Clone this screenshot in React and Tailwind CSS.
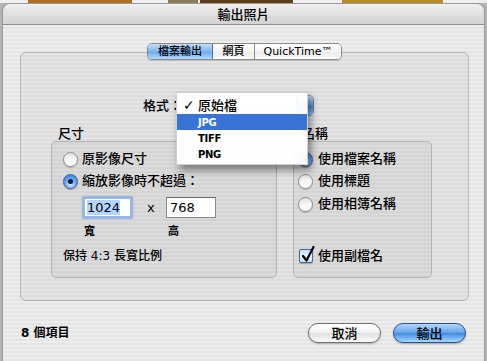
import React from "react";

function Radio({ checked }) {
  return checked ? (
    <span className="inline-flex w-[15px] h-[15px] shrink-0 rounded-full border border-[#3a5f9e] bg-[radial-gradient(circle_at_50%_75%,#d4ecff_0%,#6eaaf0_45%,#2f6fd0_100%)] items-center justify-center shadow-[0_1px_1px_rgba(0,0,0,0.3)]">
      <span className="w-[5px] h-[5px] rounded-full bg-[#0d1d3d]" />
    </span>
  ) : (
    <span className="inline-flex w-[15px] h-[15px] shrink-0 rounded-full border border-[#8c8c8c] bg-[linear-gradient(#e3e3e3,#f4f4f4_45%,#ffffff)] shadow-[0_1px_1px_rgba(0,0,0,0.2)]" />
  );
}

function Checkbox() {
  return (
    <span className="relative inline-flex w-[14px] h-[14px] shrink-0 rounded-[2px] border border-[#48679c] bg-[linear-gradient(#c7e2fb,#eaf5ff_60%,#b9daf8)] shadow-[0_1px_1px_rgba(0,0,0,0.25)]">
      <svg className="absolute left-[1px] top-[-4px]" width="15" height="17" viewBox="0 0 15 17" overflow="visible">
        <path d="M2 10 L5.5 14.5 L12.5 1" fill="none" stroke="#000" strokeWidth="2.2" strokeLinecap="round" strokeLinejoin="round" />
      </svg>
    </span>
  );
}

function Popup() {
  return (
    <div className="flex h-[21px] w-[132px] rounded-[5px] border border-[#7d7d7d] bg-[linear-gradient(#ffffff,#eeeeee_50%,#e2e2e2_51%,#fafafa)] overflow-hidden">
      <div className="flex-1" />
      <div className="w-[17px] h-full bg-[linear-gradient(#b8d9fb,#5c9ee9_50%,#3e86df_51%,#97cdfc)] border-l border-[#3d63a8]" />
    </div>
  );
}

function Menu() {
  return (
    <div className="absolute left-[155px] top-[39px] w-[132px] pt-[4px] pb-[2px] bg-white/95 border border-[#cfcfcf] shadow-[3px_5px_8px_rgba(0,0,0,0.45)] z-20">
      <div className="h-[17px] flex items-center pl-[6px] text-[13px] text-black">
        <span className="w-[15px] font-bold text-[14px]">✓</span>
        <span>原始檔</span>
      </div>
      <div className="h-[16px] flex items-center pl-[21px] bg-[#3874d6] text-white text-[10px] font-bold tracking-[-0.3px]">JPG</div>
      <div className="h-[16px] flex items-center pl-[21px] text-black text-[10px] font-bold tracking-[-0.3px]">TIFF</div>
      <div className="h-[16px] flex items-center pl-[21px] text-black text-[10px] font-bold tracking-[-0.3px]">PNG</div>
    </div>
  );
}

export default function App() {
  return (
    <div className="w-[487px] h-[361px] overflow-hidden bg-[#b4b4b4] flex flex-col font-['DejaVu_Sans','Noto_Sans_CJK_TC',sans-serif] font-medium text-black">
      {/* photos behind the sheet */}
      <div className="h-[3px] shrink-0 flex bg-[#efefef]">
        <div className="ml-[28px] w-[104px] bg-[#b36a22]" />
        <div className="ml-[36px] w-[30px] bg-[#8a7a5a]" />
        <div className="ml-[2px] w-[93px] bg-[#5e3f1c]" />
        <div className="ml-[49px] w-[101px] bg-[#b48e24]" />
      </div>
      <div className="ml-[2px] w-[483px] flex-1 flex flex-col rounded-t-[8px] border-x border-t border-[#9a9a9a] overflow-hidden">
        {/* title bar */}
        <div className="h-[21px] shrink-0 border-b border-[#8e8e8e] bg-[linear-gradient(#efefef,#d2d2d2)] flex items-center justify-center text-[13px] leading-none">
          輸出照片
        </div>
        {/* body */}
        <div className="flex-1 flex flex-col bg-[repeating-linear-gradient(180deg,#ededed_0px,#ededed_2px,#e5e5e5_2px,#e5e5e5_4px)]">
          <div className="mt-[18px] ml-[17px] w-[449px] flex justify-center relative z-10">
            <div className="flex h-[17px] text-[11px] leading-none rounded-[5px] border border-[#8a8a8a] overflow-hidden shadow-[0_1px_1px_rgba(0,0,0,0.15)]">
              <div className="w-[65px] flex items-center justify-center bg-[linear-gradient(#c4e0fb,#7eb4ee_50%,#6aa6ec_51%,#b3dcff)] border-r border-[#4b70ad]">檔案輸出</div>
              <div className="w-[42px] flex items-center justify-center bg-[linear-gradient(#ffffff,#f3f3f3_50%,#e9e9e9_51%,#fbfbfb)] border-r border-[#8a8a8a]">網頁</div>
              <div className="w-[86px] flex items-center justify-center bg-[linear-gradient(#ffffff,#f3f3f3_50%,#e9e9e9_51%,#fbfbfb)]">QuickTime™</div>
            </div>
          </div>
          {/* group box */}
          <div className="relative -mt-[8px] ml-[17px] w-[449px] h-[249px] shrink-0 rounded-[6px] border border-[#b6b6b6] bg-black/[0.035] flex flex-col">
            <div className="mt-[42px] h-[20px] flex items-center ml-[122px]">
              <span className="text-[13px] leading-none w-[39px]">格式：</span>
              <Popup />
            </div>
            <div className="mt-[11px] flex ml-[30px]">
              {/* size column */}
              <div className="flex flex-col w-[226px]">
                <div className="h-[15px] leading-[15px] text-[13px] pl-[7px]">尺寸</div>
                <div className="h-[137px] rounded-[5px] border border-[#b3b3b3] bg-black/[0.035] flex flex-col pl-[11px] pt-[8px]">
                  <div className="h-[18px] flex items-center gap-[4px] text-[13px]">
                    <Radio />
                    <span>原影像尺寸</span>
                  </div>
                  <div className="mt-[4px] h-[18px] flex items-center gap-[4px] text-[13px]">
                    <Radio checked />
                    <span>縮放影像時不超過：</span>
                  </div>
                  <div className="mt-[6px] h-[23px] flex items-center ml-[19px]">
                    <div className="w-[51px] h-[23px] rounded-[3px] border-[3px] border-[#98b8e4] bg-white flex items-center pl-[2px] shadow-[0_0_1px_rgba(40,90,170,0.6)]">
                      <span className="bg-[#b5d5ff] text-[13px] leading-[15px]">1024</span>
                    </div>
                    <span className="ml-[14px] w-[19px] text-[13px]">x</span>
                    <div className="w-[50px] h-[21px] border border-[#8c8c8c] border-t-[#6c6c6c] bg-white flex items-center pl-[3px] text-[13px]">768</div>
                  </div>
                  <div className="mt-[6px] h-[14px] flex items-center ml-[21px] text-[11px] font-bold">
                    <span className="w-[84px]">寬</span>
                    <span>高</span>
                  </div>
                  <div className="mt-[9px] h-[16px] flex items-center text-[12px]">保持 4:3 長寬比例</div>
                </div>
              </div>
              {/* name column */}
              <div className="flex flex-col w-[139px] ml-[16px]">
                <div className="h-[15px] leading-[15px] text-[13px] pl-[9px]">名稱</div>
                <div className="h-[137px] rounded-[5px] border border-[#b3b3b3] bg-black/[0.035] flex flex-col pl-[4px] pt-[8px]">
                  <div className="h-[18px] flex items-center gap-[5px] text-[13px]">
                    <Radio checked />
                    <span>使用檔案名稱</span>
                  </div>
                  <div className="mt-[4px] h-[18px] flex items-center gap-[5px] text-[13px]">
                    <Radio />
                    <span>使用標題</span>
                  </div>
                  <div className="mt-[5px] h-[18px] flex items-center gap-[5px] text-[13px]">
                    <Radio />
                    <span>使用相簿名稱</span>
                  </div>
                  <div className="mt-[34px] h-[18px] flex items-center gap-[5px] text-[13px] pl-[1px]">
                    <Checkbox />
                    <span>使用副檔名</span>
                  </div>
                </div>
              </div>
            </div>
            <Menu />
          </div>
          {/* bottom row */}
          <div className="mt-[22px] h-[20px] flex items-center pl-[18px] pr-[18px]">
            <span className="text-[12px] font-bold flex-1">8 個項目</span>
            <button className="w-[73px] h-[20px] rounded-full border border-[#707070] bg-[linear-gradient(#ffffff,#f1f1f1_50%,#dedede_51%,#fcfcfc)] text-[13px] leading-none shadow-[0_1px_2px_rgba(0,0,0,0.25)]">取消</button>
            <button className="ml-[12px] w-[73px] h-[20px] rounded-full border border-[#2e4d96] bg-[linear-gradient(#b3d6fb,#62a2ea_50%,#3f88e1_51%,#a5dbff)] text-[13px] leading-none shadow-[0_1px_2px_rgba(0,0,0,0.3)]">輸出</button>
          </div>
        </div>
      </div>
    </div>
  );
}
